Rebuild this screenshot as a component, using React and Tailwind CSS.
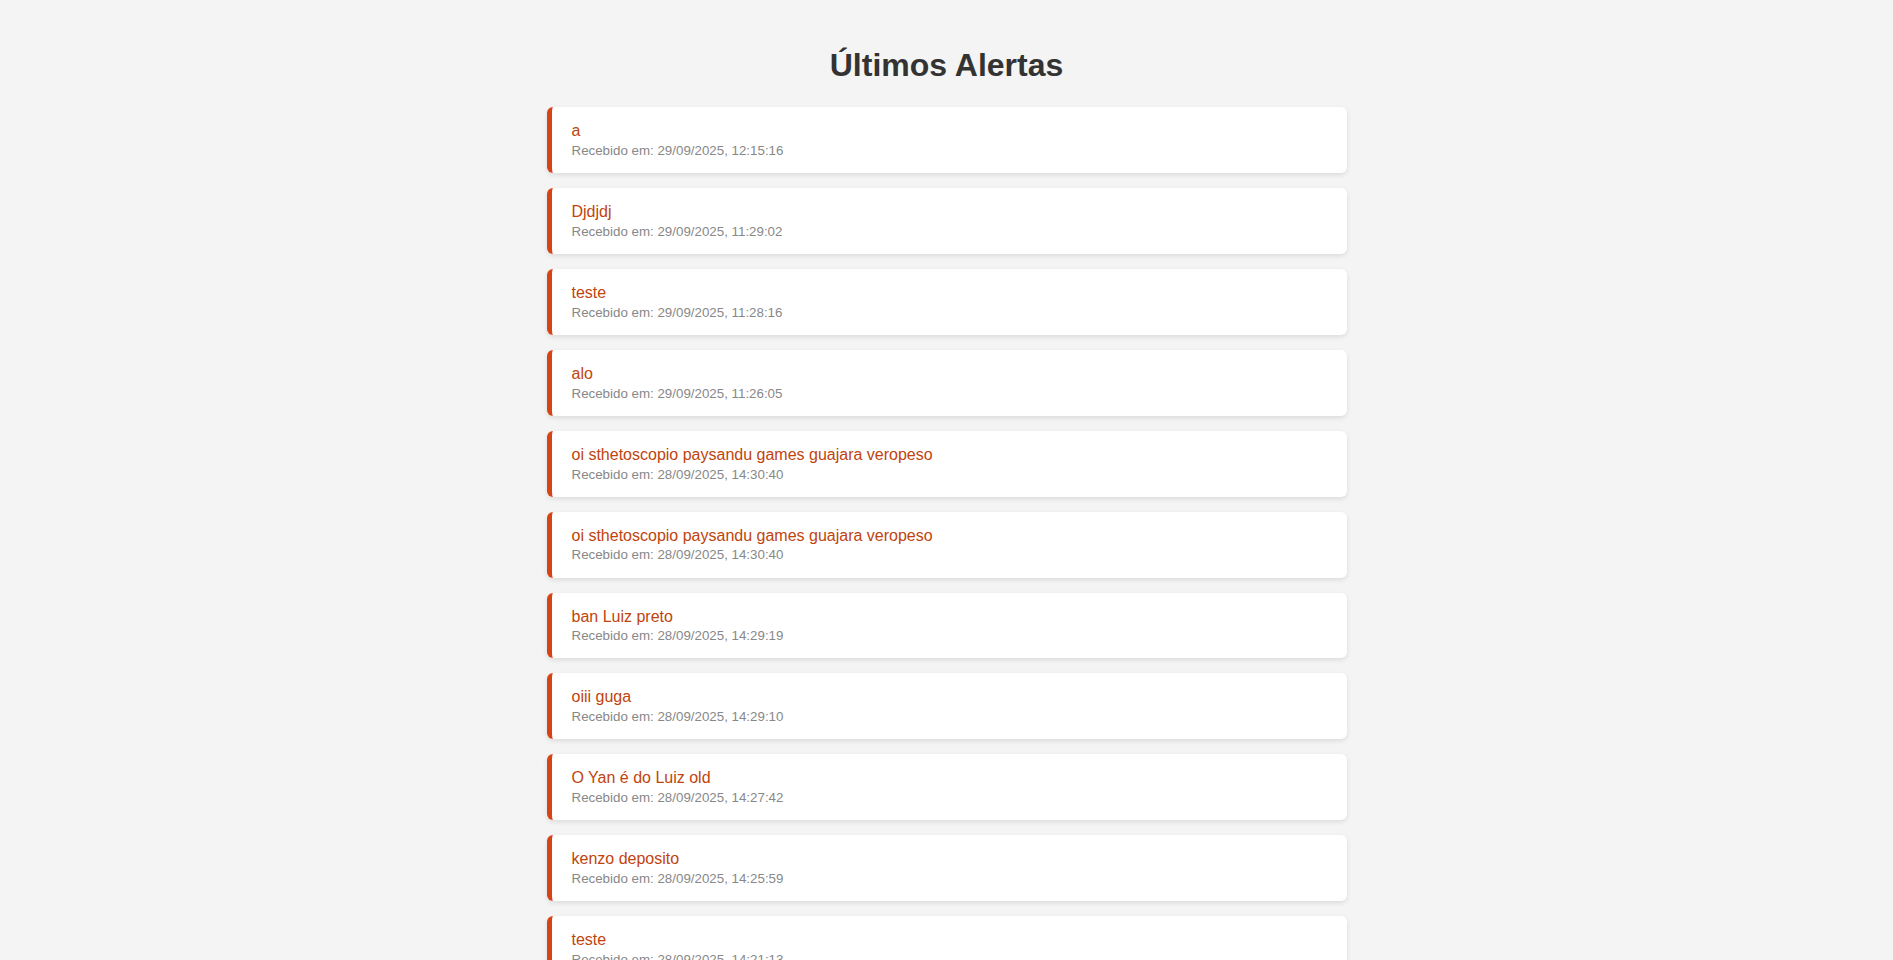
import React from 'react';

const alerts = [
  { id: 1, message: 'a', receivedAt: '29/09/2025, 12:15:16' },
  { id: 2, message: 'Djdjdj', receivedAt: '29/09/2025, 11:29:02' },
  { id: 3, message: 'teste', receivedAt: '29/09/2025, 11:28:16' },
  { id: 4, message: 'alo', receivedAt: '29/09/2025, 11:26:05' },
  { id: 5, message: 'oi sthetoscopio paysandu games guajara veropeso', receivedAt: '28/09/2025, 14:30:40' },
  { id: 6, message: 'oi sthetoscopio paysandu games guajara veropeso', receivedAt: '28/09/2025, 14:30:40' },
  { id: 7, message: 'ban Luiz preto', receivedAt: '28/09/2025, 14:29:19' },
  { id: 8, message: 'oiii guga', receivedAt: '28/09/2025, 14:29:10' },
  { id: 9, message: 'O Yan é do Luiz old', receivedAt: '28/09/2025, 14:27:42' },
  { id: 10, message: 'kenzo deposito', receivedAt: '28/09/2025, 14:25:59' },
  { id: 11, message: 'teste', receivedAt: '28/09/2025, 14:21:13' },
  { id: 12, message: 'teste', receivedAt: '28/09/2025, 14:20:48' },
];

function AlertCard({ alert }) {
  return (
    <div className="mb-[15px] rounded-md border-l-[5px] border-[#d84315] bg-white pl-[20px] pr-5 pt-[15px] pb-[14.75px] leading-[1.15] shadow-[0_2px_5px_rgba(0,0,0,0.1)]">
      <div className="text-[16px] text-[#c0440d]">{alert.message}</div>
      <div className="mt-[2.5px] text-[13.33px] text-[#888]">Recebido em: {alert.receivedAt}</div>
    </div>
  );
}

export default function App() {
  return (
    <div
      className="min-h-screen bg-[#f4f4f4] pt-[47px]"
      style={{ fontFamily: '"Liberation Sans", Arial, sans-serif' }}
    >
      <h1 className="mb-[23px] text-center text-[32px] font-bold leading-[1.15] text-[#333]">
        Últimos Alertas
      </h1>
      <div className="mx-auto w-[800px]">
        {alerts.map((a) => (
          <AlertCard key={a.id} alert={a} />
        ))}
      </div>
    </div>
  );
}
